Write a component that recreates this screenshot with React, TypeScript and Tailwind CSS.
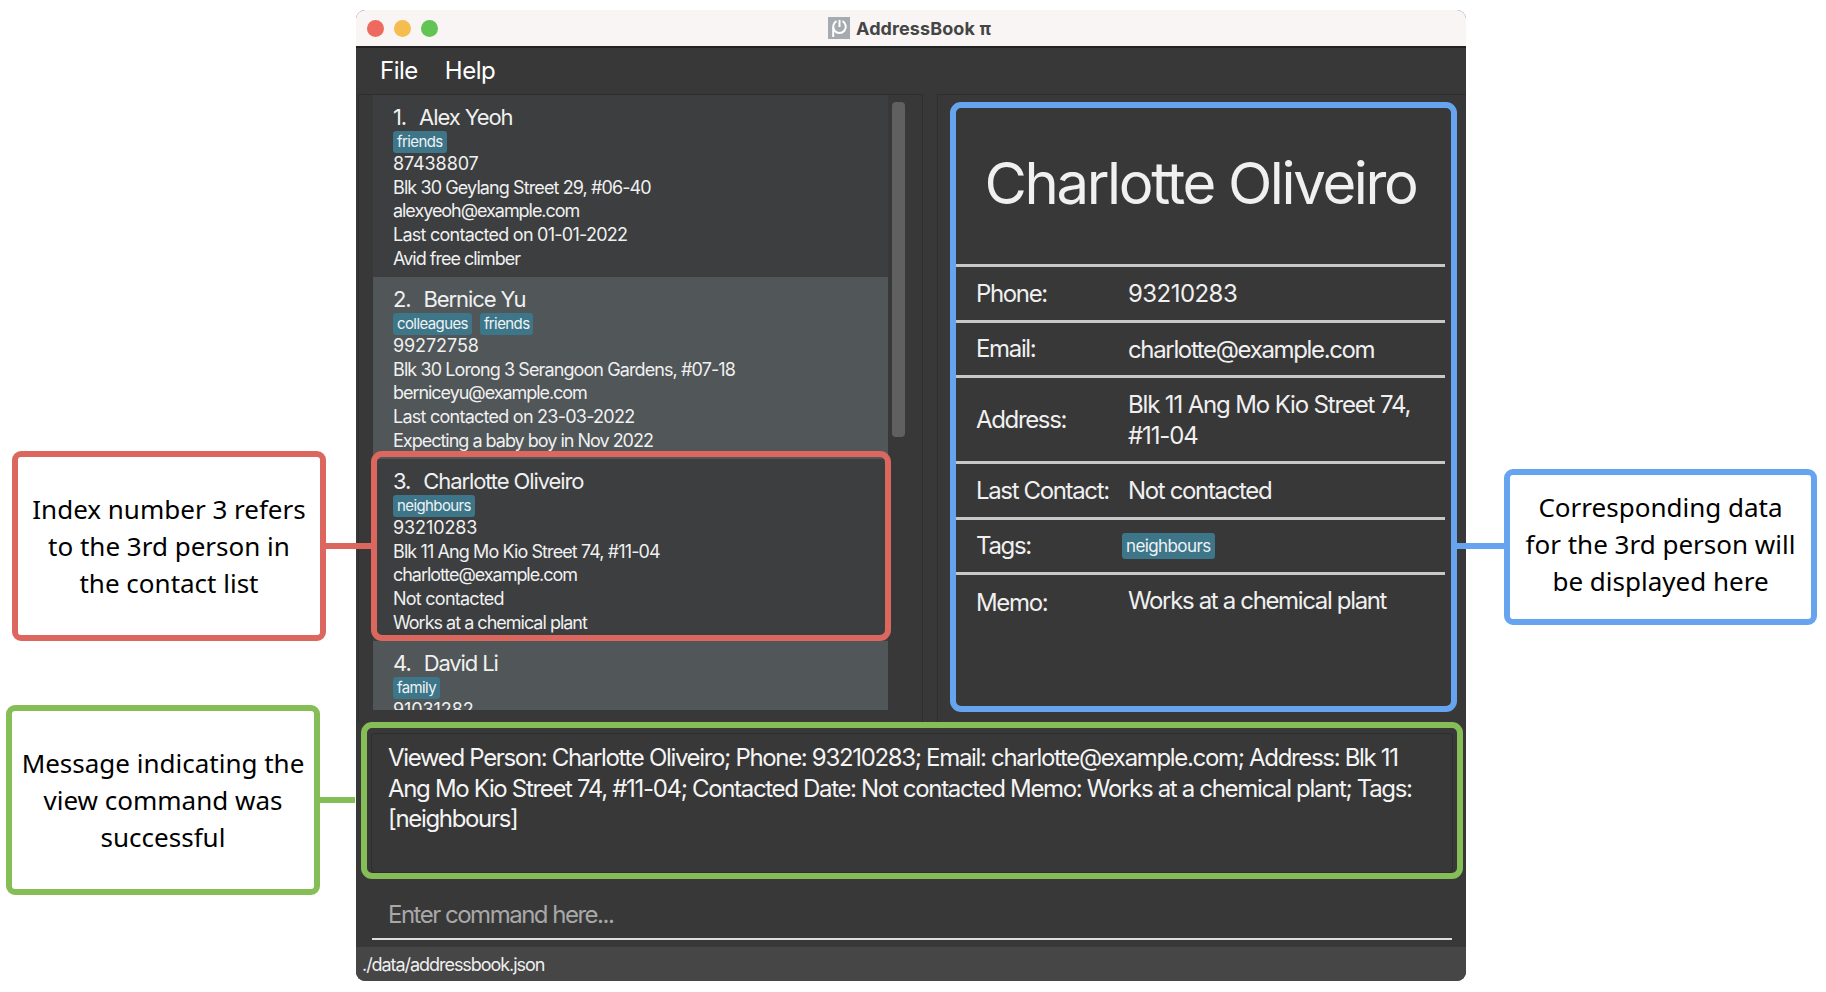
const sans = "font-['Inter','Liberation_Sans',sans-serif]";

const people = [
  {
    name: "Alex Yeoh",
    tags: ["friends"],
    phone: "87438807",
    addr: "Blk 30 Geylang Street 29, #06-40",
    email: "alexyeoh@example.com",
    last: "Last contacted on 01-01-2022",
    memo: "Avid free climber",
  },
  {
    name: "Bernice Yu",
    tags: ["colleagues", "friends"],
    phone: "99272758",
    addr: "Blk 30 Lorong 3 Serangoon Gardens, #07-18",
    email: "berniceyu@example.com",
    last: "Last contacted on 23-03-2022",
    memo: "Expecting a baby boy in Nov 2022",
  },
  {
    name: "Charlotte Oliveiro",
    tags: ["neighbours"],
    phone: "93210283",
    addr: "Blk 11 Ang Mo Kio Street 74, #11-04",
    email: "charlotte@example.com",
    last: "Not contacted",
    memo: "Works at a chemical plant",
  },
  {
    name: "David Li",
    tags: ["family"],
    phone: "91031282",
    addr: "",
    email: "",
    last: "",
    memo: "",
  },
];

const Tag = ({ text, big }: { text: string; big?: boolean }) => (
  <span
    className={
      big
        ? "-ml-[6px] block h-[26px] w-fit rounded-[3px] bg-[#3d7589] px-[4px] text-[17px] leading-[26px] tracking-[-0.6px] text-[#eef3f5]"
        : "inline-block h-[22px] rounded-[3px] bg-[#3d7589] px-[4px] text-[15px] leading-[22px] tracking-[-0.6px] text-[#eef3f5]"
    }
  >
    {text}
  </span>
);

const Card = ({ p, i }: { p: (typeof people)[number]; i: number }) => (
  <div
    className={`h-[182px] shrink-0 pl-[20px] pt-[8px] text-[#f0f0f0] ${
      i % 2 === 0 ? "bg-[#3c3e3f]" : "bg-[#515658]"
    }`}
  >
    <div className="flex text-[22px] leading-[28px] tracking-[-1.1px]">
      <span>{i + 1}.</span>
      <span className="ml-[13px]">{p.name}</span>
    </div>
    <div className="flex h-[22px] gap-[8px]">
      {p.tags.map((t) => (
        <Tag key={t} text={t} />
      ))}
    </div>
    <div className="-mt-[1px] text-[18px] leading-[23.7px]">
      <div className="tracking-[-0.1px]">{p.phone}</div>
      <div className="tracking-[-0.9px]">{p.addr}</div>
      <div className="tracking-[-1.05px]">{p.email}</div>
      <div className="tracking-[-0.75px]">{p.last}</div>
      <div className="tracking-[-1px]">{p.memo}</div>
    </div>
  </div>
);

const Row = ({
  label,
  h,
  children,
  top,
}: {
  label: string;
  h: string;
  children: React.ReactNode;
  top?: boolean;
}) => (
  <div
    className={`flex ${h} ${top ? "items-start pt-[10px]" : "items-center"} border-t-[3px] border-[#c8c8c8] pl-[20px] text-[24px] tracking-[-1.35px] text-[#f0f0f0]`}
  >
    <div className="w-[152px] shrink-0 whitespace-nowrap">{label}</div>
    <div className="leading-[31px]">{children}</div>
  </div>
);

const Callout = ({
  color,
  className,
  line,
  children,
}: {
  color: string;
  className: string;
  line: string;
  children: React.ReactNode;
}) => (
  <div
    className={`relative flex items-center justify-center rounded-[9px] border-[6px] bg-white text-center font-['Noto_Sans',sans-serif] text-[26px] leading-[37px] text-black ${color} ${className}`}
  >
    <div className={`absolute ${line}`} />
    <div className="whitespace-nowrap">{children}</div>
  </div>
);

export default function App() {
  return (
    <div className={`flex h-[992px] w-[1826px] overflow-hidden bg-white pt-[10px] ${sans}`}>
      <div className="w-[356px] shrink-0">
        <Callout
          color="border-[#dc675e]"
          className="ml-[12px] mt-[441px] h-[190px] w-[314px]"
          line="left-full top-[86px] ml-[6px] h-[6px] w-[45px] bg-[#dc675e]"
        >
          Index number 3 refers
          <br />
          to the 3rd person in
          <br />
          the contact list
        </Callout>
        <Callout
          color="border-[#85bd57]"
          className="ml-[6px] mt-[64px] h-[190px] w-[314px]"
          line="left-full top-[86px] ml-[6px] h-[6px] w-[35px] bg-[#85bd57]"
        >
          Message indicating the
          <br />
          view command was
          <br />
          successful
        </Callout>
      </div>

      <div className="flex h-[971px] w-[1110px] shrink-0 flex-col overflow-hidden rounded-[9px] bg-[#383838]">
        <div className="relative flex h-[38px] shrink-0 items-center justify-center border-b-2 border-[#222] bg-[#f8f5f4] pr-[3px]">
          <div className="absolute left-[11px] top-[10px] flex gap-[10px]">
            <div className="h-[17px] w-[17px] rounded-full bg-[#ee6a5f]" />
            <div className="h-[17px] w-[17px] rounded-full bg-[#f5bd4f]" />
            <div className="h-[17px] w-[17px] rounded-full bg-[#61c454]" />
          </div>
          <svg width="22" height="22" viewBox="0 0 22 22" className="mr-[6px]">
            <rect width="22" height="22" fill="#a6abb0" />
            <path
              d="M8.5 4.2A6.3 6.3 0 1 0 14.5 4.2"
              fill="none"
              stroke="#fff"
              strokeWidth="2"
            />
            <path d="M5.2 10v10M11.5 3v7" stroke="#fff" strokeWidth="2" />
          </svg>
          <span className="text-[18px] font-bold tracking-[0.1px] text-[#454545]">AddressBook π</span>
        </div>

        <div className="flex h-[46px] shrink-0 items-center gap-[27px] pl-[24px] text-[24px] tracking-[-0.5px] text-white">
          <span>File</span>
          <span>Help</span>
        </div>

        <div className="flex h-[628px] shrink-0">
          <div className="ml-[2px] flex w-[565px] shrink-0 border-x border-t border-[#2e2e2e] pb-[13px] pl-[14px]">
            <div className="relative h-[615px] w-[515px] shrink-0">
              <div className="flex h-full flex-col overflow-hidden">
                {people.map((p, i) => (
                  <Card key={p.name} p={p} i={i} />
                ))}
              </div>
              <div className="absolute left-[-2px] top-[356px] h-[190px] w-[520px] rounded-[11px] border-[6px] border-[#dc675e]" />
            </div>
            <div className="ml-[4px] mt-[7px] h-[335px] w-[13px] rounded-[4px] bg-[#606060]" />
          </div>
          <div className="ml-[14px] flex-1 border-l border-t border-[#2e2e2e] pl-[12px] pt-[7px]">
            <div className="h-[610px] w-[507px] rounded-[11px] border-[6px] border-[#67a4f0]">
              <div className="flex h-[156px] items-center justify-center pb-[6px] pr-[6px] text-[58px] tracking-[-2.35px] text-[#f0f0f0]">
                Charlotte Oliveiro
              </div>
              <div className="w-[489px]">
                <Row label="Phone:" h="h-[56px]">
                  <span className="tracking-[-0.55px]">93210283</span>
                </Row>
                <Row label="Email:" h="h-[55px]">
                  charlotte@example.com
                </Row>
                <Row label="Address:" h="h-[86px]">
                  <span className="tracking-[-1.15px]">
                    Blk 11 Ang Mo Kio Street 74,
                    <br />
                    #11-04
                  </span>
                </Row>
                <Row label="Last Contact:" h="h-[56px]">
                  Not contacted
                </Row>
                <Row label="Tags:" h="h-[55px]">
                  <Tag text="neighbours" big />
                </Row>
                <Row label="Memo:" h="h-[80px]" top>
                  Works at a chemical plant
                </Row>
              </div>
            </div>
          </div>
        </div>

        <div className="ml-[5px] mr-[3px] h-[157px] shrink-0 rounded-[11px] border-[6px] border-[#85bd57] px-[4px] pt-[5px]">
          <div className="h-full rounded-[3px] border border-[#2e2e2e] pl-[16px] pt-[9px] text-[24px] leading-[30.5px] tracking-[-1.33px] text-[#f4f4f4]">
            <div className="w-[1040px]">
              Viewed Person: Charlotte Oliveiro; Phone: 93210283; Email: charlotte@example.com; Address: Blk 11 Ang Mo Kio Street 74, #11-04; Contacted Date: Not contacted Memo: Works at a chemical plant; Tags: [neighbours]
            </div>
          </div>
        </div>

        <div className="flex h-[68px] shrink-0 flex-col justify-end pb-[7px] pl-[16px] pr-[14px]">
          <div className="h-[46px] border-b-2 border-[#dddddd] pl-[16px] text-[24px] leading-[42px] tracking-[-1.5px] text-[#a8a8a8]">
            Enter command here...
          </div>
        </div>

        <div className="flex h-[34px] shrink-0 items-center bg-[#464646] pl-[6px] text-[18px] tracking-[-1.05px] text-[#efefef]">
          ./data/addressbook.json
        </div>
      </div>

      <div className="flex-1">
        <Callout
          color="border-[#67a4f0]"
          className="ml-[38px] mt-[459px] h-[156px] w-[313px] pb-[5px]"
          line="right-full top-[68px] mr-[6px] h-[6px] w-[48px] bg-[#67a4f0]"
        >
          Corresponding data
          <br />
          for the 3rd person will
          <br />
          be displayed here
        </Callout>
      </div>
    </div>
  );
}
